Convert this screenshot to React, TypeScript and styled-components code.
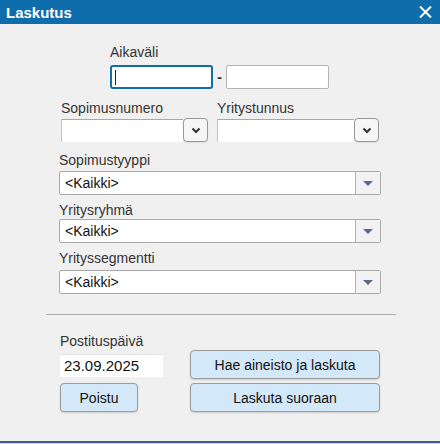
import React from 'react'
import styled, { createGlobalStyle } from 'styled-components'

const GlobalStyle = createGlobalStyle`
  html, body {
    margin: 0;
    padding: 0;
  }
  body {
    background: #f0f0f0;
    font-family: "Liberation Sans", Arial, sans-serif;
  }
`

const Window = styled.div`
  width: 440px;
  height: 444px;
  display: flex;
  flex-direction: column;
  background: #f0f0f0;
  overflow: hidden;
`

const TitleBar = styled.div`
  height: 24px;
  flex: none;
  background: #106dab;
  color: #fff;
  display: flex;
  align-items: center;
  justify-content: space-between;
  padding: 0 8px 0 6px;
  font-size: 15px;
  font-weight: bold;
`

const CloseButton = styled.button`
  border: none;
  background: transparent;
  padding: 0;
  width: 13px;
  height: 12px;
  display: flex;
  cursor: pointer;
`

const Content = styled.div`
  flex: 1;
  display: flex;
  flex-direction: column;
  align-items: center;
  padding-top: 20px;
`

const Block = styled.div<{ $width: number; $top?: number }>`
  width: ${p => p.$width}px;
  margin-top: ${p => p.$top ?? 0}px;
`

const Label = styled.div<{ $gap?: number }>`
  font-size: 14px;
  line-height: 16px;
  color: #333;
  margin-bottom: ${p => p.$gap ?? 3}px;
`

const RangeRow = styled.div`
  display: flex;
  align-items: center;
`

const TextBox = styled.div<{ $focused?: boolean }>`
  position: relative;
  box-sizing: border-box;
  width: 103px;
  height: 24px;
  background: #fff;
  border: ${p => (p.$focused ? '2px solid #106dab' : '1px solid #b4b4b4')};
  border-radius: ${p => (p.$focused ? 3 : 2)}px;

  ${p =>
    p.$focused &&
    `&::after {
      content: '';
      position: absolute;
      left: 3px;
      top: 3px;
      width: 1px;
      height: 15px;
      background: #222;
    }`}
`

const Dash = styled.span`
  width: 13px;
  text-align: center;
  font-size: 15px;
  font-weight: bold;
  color: #333;
  line-height: 24px;
`

const PairRow = styled.div`
  display: grid;
  grid-template-columns: 147px 162px;
  column-gap: 9px;
`

const Combo = styled.div`
  display: flex;
  height: 24px;
`

const ComboInput = styled.div`
  flex: 1;
  box-sizing: border-box;
  height: 23px;
  background: #fff;
  border-top: 1px solid #a8a8a8;
  border-left: 1px solid #c4c4c4;
`

const ComboButton = styled.button`
  width: 25px;
  height: 24px;
  box-sizing: border-box;
  padding: 0;
  margin-top: -1px;
  border: 1px solid #999;
  border-radius: 4px;
  background: #f6f6f6;
  display: flex;
  align-items: center;
  justify-content: center;
  box-shadow: 0 1px 1px rgba(0, 0, 0, 0.08);
`

const Select = styled.div<{ $gap?: number }>`
  display: flex;
  box-sizing: border-box;
  height: 24px;
  background: #fff;
  border: 1px solid #a9a9a9;
  border-radius: 2px;
  margin-bottom: ${p => p.$gap ?? 0}px;
`

const SelectValue = styled.div`
  flex: 1;
  padding-left: 5px;
  font-size: 14px;
  line-height: 22px;
  color: #111;
`

const SelectArrow = styled.div`
  width: 24px;
  border-left: 1px solid #b4b4b4;
  background: #f2f2f2;
  display: flex;
  align-items: center;
  justify-content: center;
`

const Triangle = styled.span`
  width: 0;
  height: 0;
  border-left: 5px solid transparent;
  border-right: 5px solid transparent;
  border-top: 5px solid #5b6a84;
`

const Separator = styled.hr`
  width: 350px;
  margin: 20px 0 0 1px;
  border: none;
  border-top: 1px solid #acacac;
`

const BottomGrid = styled.div`
  width: 320px;
  margin-top: 18px;
  display: grid;
  grid-template-columns: 103px 1fr;
  grid-template-rows: 16px 29px 29px;
  column-gap: 27px;
  row-gap: 1px;
  grid-template-areas:
    'label .'
    'date fetch'
    'quit direct';

  & > :nth-child(5),
  & > :nth-child(4) {
    margin-top: 3px;
  }
`

const DateInput = styled.div`
  grid-area: date;
  align-self: center;
  box-sizing: border-box;
  height: 23px;
  margin-top: 1px;
  background: #fff;
  border-top: 1px solid #e2e2e2;
  font-size: 15px;
  line-height: 22px;
  padding-left: 4px;
  color: #111;
`

const ActionButton = styled.button<{ $area: string; $width?: number }>`
  grid-area: ${p => p.$area};
  width: ${p => (p.$width ? `${p.$width}px` : '100%')};
  height: 29px;
  box-sizing: border-box;
  background: #d3e8f8;
  border: 1px solid #9c9c9c;
  border-radius: 4px;
  box-shadow: 0 1px 2px rgba(0, 0, 0, 0.15);
  font-family: "Liberation Sans", Arial, sans-serif;
  font-size: 14px;
  color: #111;
  padding: 0;
  cursor: pointer;
`

const BottomEdge = styled.div`
  height: 1px;
  flex: none;
  border-top: 2px solid #3e5d8b;
  background: #c8d2e2;
`

const Chevron = () => (
  <svg width="10" height="7" viewBox="0 0 10 7">
    <path d="M1.5 1.5 L5 5 L8.5 1.5" fill="none" stroke="#333" strokeWidth="2" />
  </svg>
)

const SelectField = ({ label, gap }: { label: string; gap: number }) => (
  <>
    <Label $gap={gap}>{label}</Label>
    <Select>
      <SelectValue>&lt;Kaikki&gt;</SelectValue>
      <SelectArrow>
        <Triangle />
      </SelectArrow>
    </Select>
  </>
)

const App: React.FC = () => {
  return (
    <Window>
      <GlobalStyle />
      <TitleBar>
        <span>Laskutus</span>
        <CloseButton aria-label="Sulje">
          <svg width="13" height="12" viewBox="0 0 13 12">
            <path d="M1 0.5 L12 11.5 M12 0.5 L1 11.5" stroke="#fff" strokeWidth="2" />
          </svg>
        </CloseButton>
      </TitleBar>
      <Content>
        <Block $width={220}>
          <Label $gap={5}>Aikaväli</Label>
          <RangeRow>
            <TextBox $focused />
            <Dash>-</Dash>
            <TextBox />
          </RangeRow>
        </Block>

        <Block $width={318} $top={11}>
          <PairRow>
            <div>
              <Label>Sopimusnumero</Label>
              <Combo>
                <ComboInput />
                <ComboButton>
                  <Chevron />
                </ComboButton>
              </Combo>
            </div>
            <div>
              <Label>Yritystunnus</Label>
              <Combo>
                <ComboInput />
                <ComboButton>
                  <Chevron />
                </ComboButton>
              </Combo>
            </div>
          </PairRow>
        </Block>

        <Block $width={322} $top={9}>
          <SelectField label="Sopimustyyppi" gap={3} />
        </Block>
        <Block $width={322} $top={7}>
          <SelectField label="Yritysryhmä" gap={1} />
        </Block>
        <Block $width={322} $top={7}>
          <SelectField label="Yrityssegmentti" gap={4} />
        </Block>

        <Separator />

        <BottomGrid>
          <Label style={{ gridArea: 'label' }}>Postituspäivä</Label>
          <DateInput>23.09.2025</DateInput>
          <ActionButton $area="fetch">Hae aineisto ja laskuta</ActionButton>
          <ActionButton $area="quit" $width={78}>Poistu</ActionButton>
          <ActionButton $area="direct">Laskuta suoraan</ActionButton>
        </BottomGrid>
      </Content>
      <BottomEdge />
    </Window>
  )
}

export default App
